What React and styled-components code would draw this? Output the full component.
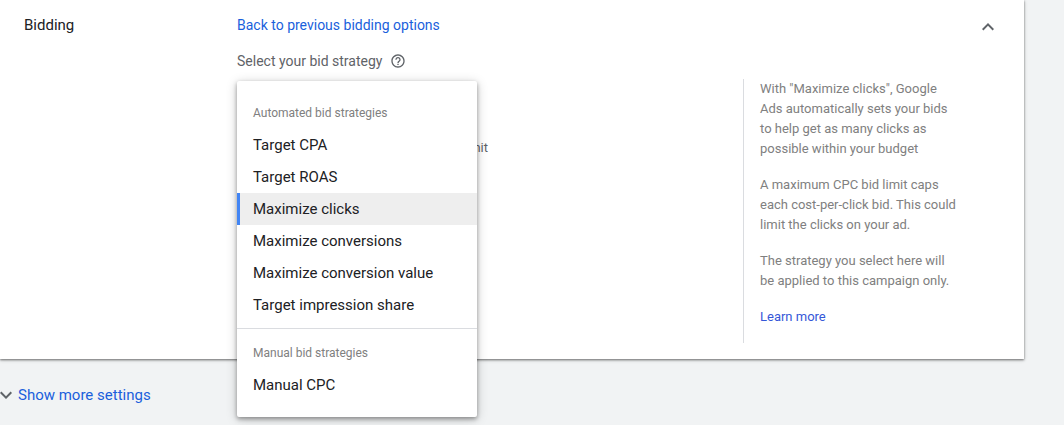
import { useState } from 'react'
import styled, { createGlobalStyle } from 'styled-components'

const GlobalStyle = createGlobalStyle`
	* {
		box-sizing: border-box;
	}
	body {
		margin: 0;
		background: #f1f3f4;
		color: #202124;
		font-family: Roboto, "Liberation Sans", sans-serif;
		font-size: 15px;
		line-height: 20px;
	}
	button {
		font: inherit;
		color: inherit;
		background: none;
		border: 0;
		padding: 0;
		cursor: pointer;
	}
`

const Page = styled.main`
	min-height: 100vh;
`

const Card = styled.section`
	display: grid;
	grid-template-columns: 213px 1fr 281px;
	margin-right: 40px;
	padding: 15px 0 16px 24px;
	background: white;
	box-shadow: 0 1px 2px rgba(0, 0, 0, 0.45), 0 1px 4px rgba(0, 0, 0, 0.2);
`

const Title = styled.h2`
	margin: 0;
	font-size: 15px;
	font-weight: 400;
`

const Link = styled.a`
	color: ${props => props.$color || '#1a5fdc'};
	text-decoration: none;
`

const Strategy = styled.div`
	display: flex;
	flex-direction: column;
	align-items: flex-start;
	gap: 16px;
	font-size: 14px;
`

const FieldLabel = styled.div`
	display: flex;
	align-items: center;
	gap: 8px;
	color: #5f6368;
`

const IconButton = styled.button`
	display: flex;
	color: #5f6368;
`

const Field = styled.div`
	position: relative;
	width: 251px;
	font-size: 15px;
`

const Limit = styled.label`
	display: flex;
	justify-content: flex-end;
	align-items: center;
	gap: 8px;
	padding-top: 51px;
	color: #5f6368;
	font-size: 13px;
	white-space: nowrap;
	input {
		margin: 0;
	}
`

const Menu = styled.div`
	position: absolute;
	top: -6px;
	left: 0;
	z-index: 1;
	width: 240px;
	padding: 8px 0 9px;
	background: white;
	border-radius: 2px;
	box-shadow: 0 2px 4px rgba(0, 0, 0, 0.35), 0 2px 12px rgba(0, 0, 0, 0.2);
`

const Group = styled.div`
	display: flex;
	flex-direction: column;
	padding: 8px 0 7px;
	& + & {
		border-top: 1px solid #dadce0;
	}
`

const GroupName = styled.div`
	padding: 0 16px;
	color: #808080;
	font-size: 12px;
	line-height: 32px;
`

const Option = styled.button`
	&& {
		padding: 0 16px;
		background: ${props => props.$selected ? '#eeeeee' : 'transparent'};
		box-shadow: ${props => props.$selected ? 'inset 3px 0 #4285f4' : 'none'};
	}
	line-height: 32px;
	text-align: left;
`

const Side = styled.div`
	display: flex;
	flex-direction: column;
	gap: 40px;
`

const Collapse = styled(IconButton)`
	align-self: flex-end;
	margin-right: 24px;
`

const Help = styled.aside`
	padding: 0 64px 16px 16px;
	border-left: 1px solid #dadce0;
	color: #808080;
	font-size: 13px;
	p {
		margin: 0 0 16px;
	}
	p:last-child {
		margin: 0;
	}
`

const More = styled.button`
	&& {
		color: #1a5fdc;
	}
	display: flex;
	align-items: center;
	margin-top: 24px;
	svg {
		margin-left: -6px;
		color: #5f6368;
	}
`

const groups = [
	{
		name: 'Automated bid strategies',
		options: [
			'Target CPA',
			'Target ROAS',
			'Maximize clicks',
			'Maximize conversions',
			'Maximize conversion value',
			'Target impression share',
		],
	},
	{ name: 'Manual bid strategies', options: ['Manual CPC'] },
]

function Icon({ d, size = 24 }) {
	return (
		<svg width={size} height={size} viewBox="0 0 24 24" fill="currentColor" aria-hidden="true">
			<path d={d} />
		</svg>
	)
}

const chevronUp = 'M12 8l-6 6 1.41 1.41L12 10.83l4.59 4.58L18 14z'
const chevronDown = 'M16.59 8.59L12 13.17 7.41 8.59 6 10l6 6 6-6z'
const help = 'M11 18h2v-2h-2v2zm1-16C6.48 2 2 6.48 2 12s4.48 10 10 10 10-4.48 10-10S17.52 2 12 2zm0 18c-4.41 0-8-3.59-8-8s3.59-8 8-8 8 3.59 8 8-3.59 8-8 8zm0-14c-2.21 0-4 1.79-4 4h2c0-1.1.9-2 2-2s2 .9 2 2c0 2-3 1.75-3 5h2c0-2.25 3-2.5 3-5 0-2.21-1.79-4-4-4z'

function StrategyMenu() {
	const [selected, setSelected] = useState('Maximize clicks')

	return (
		<Menu role="listbox" aria-label="Select your bid strategy">
			{groups.map(group => (
				<Group key={group.name} role="group" aria-label={group.name}>
					<GroupName>{group.name}</GroupName>
					{group.options.map(option => (
						<Option
							key={option}
							type="button"
							role="option"
							aria-selected={option === selected}
							$selected={option === selected}
							onClick={() => setSelected(option)}
						>
							{option}
						</Option>
					))}
				</Group>
			))}
		</Menu>
	)
}

function App() {
	return (
		<Page>
			<GlobalStyle />
			<Card>
				<Title>Bidding</Title>
				<Strategy>
					<Link href="#">Back to previous bidding options</Link>
					<FieldLabel>
						Select your bid strategy
						<IconButton type="button" aria-label="Help"><Icon d={help} size={16} /></IconButton>
					</FieldLabel>
					<Field>
						<StrategyMenu />
						<Limit>
							<input type="checkbox" />
							Set a maximum cost per click bid limit
						</Limit>
					</Field>
				</Strategy>
				<Side>
					<Collapse type="button" aria-label="Collapse"><Icon d={chevronUp} /></Collapse>
					<Help>
						<p>With "Maximize clicks", Google Ads automatically sets your bids to help get as many clicks as possible within your budget</p>
						<p>A maximum CPC bid limit caps each cost-per-click bid. This could limit the clicks on your ad.</p>
						<p>The strategy you select here will be applied to this campaign only.</p>
						<p><Link href="#" $color="#3557d8">Learn more</Link></p>
					</Help>
				</Side>
			</Card>
			<More type="button">
				<Icon d={chevronDown} />
				Show more settings
			</More>
		</Page>
	)
}

export default App
